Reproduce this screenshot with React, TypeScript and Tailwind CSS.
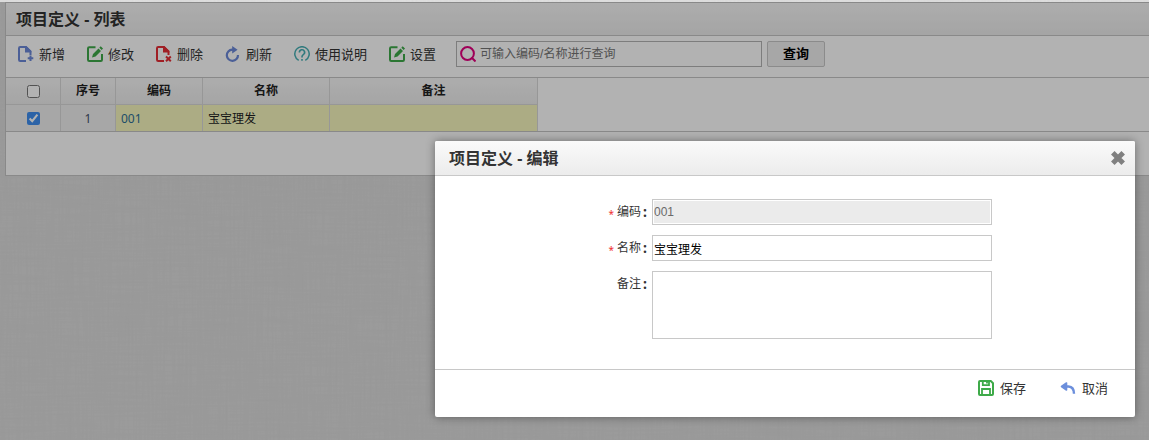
import type { ReactNode } from "react";
import { useState } from "react";

const uiFont =
  "font-['Noto_Sans','Noto_Sans_CJK_SC',sans-serif]";
const fieldFont =
  "font-['Liberation_Sans','Noto_Sans_CJK_SC',sans-serif]";

function Icon({ children, className }: { children: ReactNode; className: string }) {
  return (
    <svg aria-hidden="true" viewBox="0 0 16 16" className={`size-4 shrink-0 ${className}`} fill="none" stroke="currentColor" strokeWidth="2">
      {children}
    </svg>
  );
}

const AddIcon = () => (
  <Icon className="text-[#6c88d8]">
    <path d="M8 15H2.2Q1 15 1 13.8V2.2Q1 1 2.2 1H8L12.5 5.5V9" />
    <path d="M7 0.3H8.5L13.3 5V6.6H7Z" fill="currentColor" stroke="none" />
    <path d="M12.5 9.4V15M9.7 12.2H15.3" />
  </Icon>
);
const EditIcon = () => (
  <Icon className="text-[#3eaa49]">
    <path d="M8.5 1.2H2.2Q1 1.2 1 2.4V13.8Q1 15 2.2 15H13.8Q15 15 15 13.8V8" />
    <path d="M5 11.4L6 8L11.5 2.5L14 5L8.5 10.4ZM12.3 1.7L13.7 0.3L16 2.5L14.7 3.9Z" fill="currentColor" stroke="none" />
  </Icon>
);
const DeleteIcon = () => (
  <Icon className="text-[#e52d35]">
    <path d="M8 15H2.2Q1 15 1 13.8V2.2Q1 1 2.2 1H8L12.5 5.5V9" />
    <path d="M7 0.3H8.5L13.3 5V6.6H7Z" fill="currentColor" stroke="none" />
    <path d="M10 10.5L14.8 15.2M14.8 10.5L10 15.2" />
  </Icon>
);
const RefreshIcon = () => (
  <Icon className="text-[#6c88d8]">
    <path d="M9.5 3.6H7.2A5.6 5.6 0 1 0 13 9" strokeWidth="2.2" />
    <path d="M7.2 0L12.6 3.8L7.2 7.4Z" fill="currentColor" stroke="none" />
  </Icon>
);
const HelpIcon = () => (
  <Icon className="text-[#45afb4]">
    <path d="M4.7 14.3A7.2 7.2 0 1 1 11.3 14.3" strokeWidth="1.5" />
    <path d="M5.4 6.5A2.6 2.6 0 1 1 9.3 8.6Q8 9.4 8 10.7V11.4M8 13V14.8" strokeWidth="1.6" />
  </Icon>
);
const SaveIcon = () => (
  <Icon className="text-[#3eaa49]">
    <path d="M2 1H12.8L15 3.2V14Q15 15 14 15H2Q1 15 1 14V2Q1 1 2 1Z" />
    <path d="M4.8 1V5.2H11V1M9 1V3.5M4 15V9H12V15" strokeWidth="1.8" />
  </Icon>
);
const CancelIcon = () => (
  <Icon className="text-[#6c8fdc]">
    <path d="M1.5 6.5L6.5 3V10Z" fill="currentColor" strokeWidth="1.6" strokeLinejoin="round" />
    <path d="M5.5 6.5H8.5Q14 6.9 14 13.8" strokeWidth="2.4" />
  </Icon>
);

function ToolButton({ icon, label }: { icon: ReactNode; label: string }) {
  return (
    <button type="button" className="flex shrink-0 items-center gap-[5px] text-[13px] leading-5 text-[#333]">
      {icon}
      <span>{label}</span>
    </button>
  );
}

function Linen() {
  return (
    <svg aria-hidden="true" className="absolute inset-0 size-full opacity-12">
      <filter id="weft" x="0" y="0" width="100%" height="100%">
        <feTurbulence type="fractalNoise" baseFrequency="0.02 0.5" numOctaves="2" seed="4" />
        <feColorMatrix values="0 0 0 0 0.45  0 0 0 0 0.45  0 0 0 0 0.45  1.6 0 0 0 -0.5" />
      </filter>
      <filter id="warp" x="0" y="0" width="100%" height="100%">
        <feTurbulence type="fractalNoise" baseFrequency="0.5 0.02" numOctaves="2" seed="9" />
        <feColorMatrix values="0 0 0 0 0.45  0 0 0 0 0.45  0 0 0 0 0.45  1.6 0 0 0 -0.5" />
      </filter>
      <rect width="100%" height="100%" filter="url(#weft)" />
      <rect width="100%" height="100%" filter="url(#warp)" />
    </svg>
  );
}

const headCell = "border-r border-b border-[#d8d8d8] bg-linear-to-b from-[#f8f8f8] to-[#ededed] p-0 font-bold";
const rowCell = "border-r border-[#d8d8d8] p-0 pt-px";

function ListPanel() {
  const [checked, setChecked] = useState(true);
  return (
    <main className="relative ml-[5px] border border-r-0 border-[#c4c4c4] bg-white">
      <h1 className="h-[33px] border-b border-[#c4c4c4] bg-linear-to-b from-[#f8f8f8] to-[#ececec] pl-2.5 text-base leading-8 font-bold text-[#333]">
        项目定义 - 列表
      </h1>
      <div className="flex h-[42px] items-center gap-5 border-b border-[#c4c4c4] pl-3">
        <div className="flex shrink-0 items-center gap-[22px] pb-1.5">
          <ToolButton icon={<AddIcon />} label="新增" />
          <ToolButton icon={<EditIcon />} label="修改" />
          <ToolButton icon={<DeleteIcon />} label="删除" />
          <ToolButton icon={<RefreshIcon />} label="刷新" />
          <ToolButton icon={<HelpIcon />} label="使用说明" />
          <ToolButton icon={<EditIcon />} label="设置" />
        </div>
        <form className="flex items-center gap-[5px] pb-1.5" onSubmit={(e) => e.preventDefault()}>
          <label className="flex h-[26px] w-[306px] items-center gap-1 border border-[#b4b4b4] bg-white pl-[3px]">
            <svg aria-hidden="true" viewBox="0 0 16 16" className="size-4 shrink-0 text-[#e4007f]" fill="none" stroke="currentColor" strokeWidth="2">
              <circle cx="7.5" cy="7.5" r="6.4" />
              <path d="M11.5 11.5L15.5 15.5" />
            </svg>
            <input aria-label="查询" placeholder="可输入编码/名称进行查询" className={`h-6 min-w-0 flex-1 text-xs outline-none placeholder:text-[#757575] ${fieldFont}`} />
          </label>
          <button type="submit" className="h-[26px] w-[58px] rounded-xs border border-[#c8c8c8] bg-[#efefef] pb-0.5 text-[13px] leading-5 font-bold text-black">
            查询
          </button>
        </form>
      </div>
      <div className="border-b border-[#c4c4c4]">
        <table className="w-[532px] table-fixed border-separate border-spacing-0 text-xs leading-5 text-[#222]">
          <colgroup>
            <col className="w-[55px]" />
            <col className="w-[55px]" />
            <col className="w-[87px]" />
            <col className="w-[127px]" />
            <col className="w-[208px]" />
          </colgroup>
          <thead>
            <tr className="h-[27px]">
              <th className={headCell}>
                <input type="checkbox" aria-label="全选" className="mx-auto block size-[13px]" />
              </th>
              <th className={headCell}>序号</th>
              <th className={headCell}>编码</th>
              <th className={headCell}>名称</th>
              <th className={headCell}>备注</th>
            </tr>
          </thead>
          <tbody>
            <tr className="h-[26px]">
              <td className={`${rowCell} bg-[#f0f0f0]`}>
                <input type="checkbox" aria-label="选择 001" checked={checked} onChange={(e) => setChecked(e.target.checked)} className="mx-auto block size-[13px] accent-[#3f8ff0]" />
              </td>
              <td className={`${rowCell} bg-[#f0f0f0] text-center text-[#44516a]`}>1</td>
              <td className={`${rowCell} bg-[#f6f6be] pl-[5px] text-[#2d6f97]`}>001</td>
              <td className={`${rowCell} bg-[#f6f6be] pl-[5px]`}>宝宝理发</td>
              <td className={`${rowCell} bg-[#f6f6be]`} />
            </tr>
          </tbody>
        </table>
      </div>
      <div className="h-[43px]" />
    </main>
  );
}

function FieldLabel({ id, label, required }: { id: string; label: string; required?: boolean }) {
  return (
    <label htmlFor={id} className="flex h-[26px] w-[215px] shrink-0 items-center justify-end gap-[3px] text-xs leading-5 text-[#333]">
      {required && <span className="pt-1 text-[10px] leading-4 text-[#f03030]">*</span>}
      <span className="flex">
        {label}
        <b className="w-[9px] pl-[2px] text-sm leading-5 font-bold">:</b>
      </span>
    </label>
  );
}

const field = `w-[340px] border border-[#c8c8c8] px-px text-xs ${fieldFont}`;

function EditDialog() {
  return (
    <section role="dialog" aria-labelledby="edit-title" className="absolute top-[141px] right-3.5 w-[700px] rounded-xs bg-white shadow-[0_0_10px_rgba(0,0,0,0.4)]">
      <header className="flex h-[35px] items-center justify-between rounded-t-xs border-b border-[#c8c8c8] bg-linear-to-b from-[#fafafa] to-[#ececec] pr-[9px] pl-3.5">
        <h2 id="edit-title" className="text-base leading-6 font-bold text-[#333]">项目定义 - 编辑</h2>
        <button type="button" aria-label="关闭" className="text-[#808080]">
          <svg aria-hidden="true" viewBox="0 0 16 16" className="size-4" fill="none" stroke="currentColor" strokeWidth="5">
            <path d="M2.8 2.8L13.2 13.2M13.2 2.8L2.8 13.2" />
          </svg>
        </button>
      </header>
      <form onSubmit={(e) => e.preventDefault()}>
        <div className="flex flex-col gap-2.5 border-b border-[#c8c8c8] pt-[23px] pb-[30px]">
          <div className="flex gap-0.5">
            <FieldLabel id="code" label="编码" required />
            <input id="code" readOnly defaultValue="001" className={`${field} h-[26px] bg-[#ebebeb] text-[#6a6a6a] shadow-[inset_0_0_0_1px_white]`} />
          </div>
          <div className="flex gap-0.5">
            <FieldLabel id="name" label="名称" required />
            <input id="name" defaultValue="宝宝理发" className={`${field} h-[26px] text-black`} />
          </div>
          <div className="flex gap-0.5">
            <FieldLabel id="note" label="备注" />
            <textarea id="note" className={`${field} h-[68px] resize-none`} />
          </div>
        </div>
        <footer className="flex h-[47px] items-center justify-end gap-[34px] pr-[27px] pb-3">
          <button type="submit" className="flex items-center gap-1.5 text-[13px] leading-5 text-[#333]">
            <SaveIcon />
            <span>保存</span>
          </button>
          <button type="button" className="flex items-center gap-1.5 text-[13px] leading-5 text-[#333]">
            <CancelIcon />
            <span>取消</span>
          </button>
        </footer>
      </form>
    </section>
  );
}

export default function App() {
  return (
    <div className={`relative min-h-screen overflow-hidden bg-[#dfdfdf] pt-0.5 ${uiFont}`}>
      <Linen />
      <ListPanel />
      <div className="absolute inset-x-0 top-0.5 bottom-0 bg-black/30" />
      <EditDialog />
    </div>
  );
}
